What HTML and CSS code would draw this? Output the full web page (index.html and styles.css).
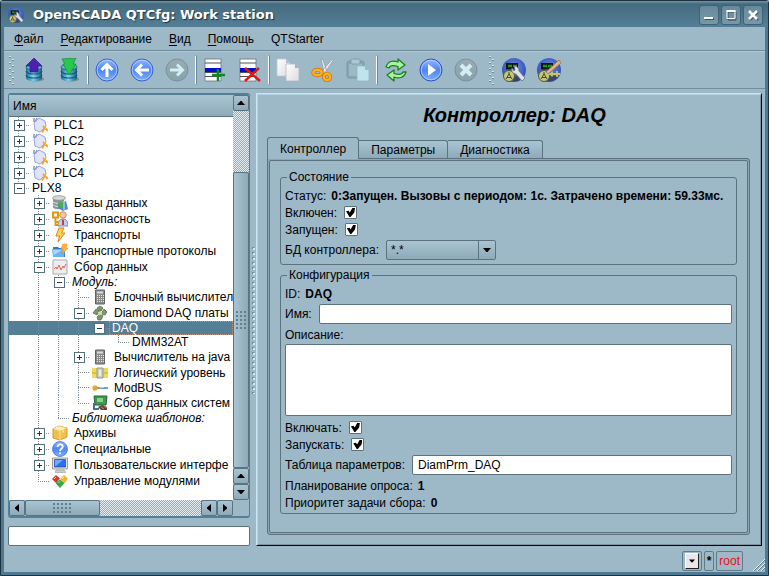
FILE: index.html
```html
<!DOCTYPE html>
<html lang="ru">
<head>
<meta charset="utf-8">
<title>OpenSCADA QTCfg: Work station</title>
<link rel="stylesheet" href="styles.css">
</head>
<body>
<svg class="defs" aria-hidden="true">
  <defs>
    <linearGradient id="gBlue" x1="0" y1="0" x2="0" y2="1"><stop offset="0" stop-color="#8fb8ff"/><stop offset=".5" stop-color="#4d86f2"/><stop offset="1" stop-color="#7fb0ff"/></linearGradient>
    <linearGradient id="gGrey" x1="0" y1="0" x2="0" y2="1"><stop offset="0" stop-color="#9aabb2"/><stop offset="1" stop-color="#86a3ad"/></linearGradient>
    <linearGradient id="gDb" x1="0" y1="0" x2="1" y2="0"><stop offset="0" stop-color="#1c6d94"/><stop offset=".45" stop-color="#7fd6ee"/><stop offset="1" stop-color="#14587d"/></linearGradient>
    <linearGradient id="gPage" x1="0" y1="0" x2="1" y2="1"><stop offset="0" stop-color="#ffffff"/><stop offset="1" stop-color="#dcdce2"/></linearGradient>
    <radialGradient id="gOrb" cx=".5" cy=".4" r=".6"><stop offset="0" stop-color="#6e8fe6"/><stop offset="1" stop-color="#2c4bb0"/></radialGradient>
    <symbol id="db" viewBox="0 0 24 24">
      <ellipse cx="14" cy="21" rx="8" ry="2.6" fill="#54707c" opacity=".6"/>
      <path d="M4 9v11c0 4 16 4 16 0V9z" fill="url(#gDb)"/>
      <ellipse cx="12" cy="9" rx="8" ry="3" fill="#5cb6d4" stroke="#1c6285" stroke-width=".8"/>
      <path d="M4 13c1 4 15 4 16 0M4 17c1 4 15 4 16 0" fill="none" stroke="#155a7c" stroke-width="1.2"/>
    </symbol>
    <symbol id="up" viewBox="0 0 24 24"><circle cx="12" cy="12" r="11" fill="url(#gBlue)" stroke="#3d62c8"/><circle cx="12" cy="12" r="9.8" fill="none" stroke="#b8d2ff" stroke-width=".8"/><path d="M12 19V7M6.500 12 12 6.500 17.500 12" fill="none" stroke="#fff" stroke-width="3"/></symbol>
    <symbol id="left" viewBox="0 0 24 24"><circle cx="12" cy="12" r="11" fill="url(#gBlue)" stroke="#3d62c8"/><circle cx="12" cy="12" r="9.800" fill="none" stroke="#b8d2ff" stroke-width=".8"/><path d="M19 12H7M12 6.500 6.500 12 12 17.500" fill="none" stroke="#fff" stroke-width="3"/></symbol>
    <symbol id="right" viewBox="0 0 24 24"><circle cx="12" cy="12" r="11" fill="url(#gGrey)" stroke="#7b929c"/><path d="M5 12h12M12 6.500 17.500 12 12 17.500" fill="none" stroke="#d3edf5" stroke-width="3"/></symbol>
    <symbol id="sheet" viewBox="0 0 24 24"><path d="M2 1h16v22H2z" fill="#fff" stroke="#6c7479" stroke-width=".8"/><path d="M2 5h16M2 14.500h16M2 18.500h16" stroke="#4c5358"/><path d="M2 10h16v4H2z" fill="#0010c8"/></symbol>
    <symbol id="copy" viewBox="0 0 24 24"><path d="M1 1h9l4 4v13H1z" fill="url(#gPage)" stroke="#c2c6cc" stroke-width=".8"/><path d="M10 1v4h4z" fill="#b9bcc4"/><path d="M10 6h9l4 4v13H10z" fill="url(#gPage)" stroke="#b2b8be" stroke-width=".8"/><path d="M19 6v4h4z" fill="#a9adb6"/></symbol>
    <symbol id="cut" viewBox="0 0 24 24"><path d="M10 1l2 .5 4.500 14-3 1zM21.500 1l1 1-9.500 14-3-2z" fill="#e8e8f2" stroke="#8f92a6" stroke-width=".7"/><g fill="none" stroke="#c97400" stroke-width="3.800"><ellipse cx="6.500" cy="14.500" rx="4.200" ry="2.800"/><ellipse cx="16" cy="19" rx="3.200" ry="3.200"/></g><g fill="none" stroke="#ffb020" stroke-width="2.400"><ellipse cx="6.500" cy="14.500" rx="4.200" ry="2.800"/><ellipse cx="16" cy="19" rx="3.200" ry="3.200"/></g></symbol>
    <symbol id="paste" viewBox="0 0 24 24"><rect x="1" y="3" width="17" height="17" rx="2" fill="#87a6b2" stroke="#789aa8"/><rect x="3" y="6" width="13" height="12" fill="#9cbac6"/><rect x="5" y="1" width="9" height="5" rx="1" fill="#a9c8d4" stroke="#7798a4" stroke-width=".8"/><path d="M11 8h8l4 4v11H11z" fill="#c0e3ee" stroke="#8fb9c8" stroke-width=".8"/><path d="M19 8v4h4z" fill="#92bdcc"/></symbol>
    <symbol id="reload" viewBox="0 0 24 24"><g fill="#a5f59a" stroke="#1f7d26" stroke-width="1.300" stroke-linejoin="round"><path d="M2 9C4 3 9 2 14 4V1l7 6-7 5V8.500C9 7 6 7 5 10z"/><path d="M22 14c-2 6-7 7-12 5v4l-7-6 7-5v3.500c5 1.500 8 1 9-1.500z"/></g></symbol>
    <symbol id="play" viewBox="0 0 24 24"><circle cx="12" cy="12" r="11" fill="url(#gBlue)" stroke="#2c50b4"/><circle cx="12" cy="12" r="9.800" fill="none" stroke="#b8d2ff" stroke-width=".8"/><path d="M9 6v12l8-6z" fill="#fff"/></symbol>
    <symbol id="stop" viewBox="0 0 24 24"><circle cx="12" cy="12" r="11" fill="url(#gGrey)" stroke="#7b929c"/><path d="M7 7l10 10M17 7 7 17" stroke="#d3edf5" stroke-width="4"/></symbol>
    <symbol id="orb" viewBox="0 0 24 24"><circle cx="12" cy="12" r="12" fill="url(#gOrb)"/><path d="M2 18a12 12 0 0 0 20 0z" fill="#3c4668"/><rect x="4" y="5" width="12" height="6.500" fill="#0c160c"/><path d="M6 8h4M11 8h4" stroke="#1c8f26" stroke-width="2.500"/><circle cx="7" cy="18" r="5.500" fill="#c3c87c" stroke="#55582e"/><path d="M4 21l3-5 3 5M7 17v-3M5 19.500h4" fill="none" stroke="#484a22"/></symbol>
    <symbol id="tools" viewBox="0 0 24 24"><use href="#orb"/><path d="M10 10c-1 3 1 6 4 6l6 7 3-3-6-7c0-3-2-5-5-5l1 4-1 1z" fill="#dde2ea" stroke="#68707e" stroke-width=".8"/></symbol>
    <symbol id="pencil" viewBox="0 0 24 24"><use href="#orb"/><path d="M11 16h12M15 13.500v5M20 13v6" stroke="#c9c66a" stroke-width="1.800"/><path d="M9 14 22 2l2 3-13 11z" fill="#e3b48c" stroke="#9b704e" stroke-width=".8"/></symbol>
    <symbol id="plc" viewBox="0 0 16 16"><path d="M2 1v4M5 1l-2 4" stroke="#9494cf" stroke-width="1.500"/><path d="M7 1l6 3 1 5-6 6-5-2-1-7z" fill="#dfe4fb" stroke="#9da3d6"/><path d="M10 15.500l3-5M11 9l5 5" stroke="#f4a53a" stroke-width="2"/></symbol>
    <symbol id="dbs" viewBox="0 0 16 16"><path d="M1 3v9c0 3 11 3 11 0V3z" fill="#8d9894"/><ellipse cx="7" cy="3" rx="6.500" ry="2.300" fill="#d5dbd8" stroke="#7c8784" stroke-width=".7"/><path d="M1 7c3 2 9 2 11 0M1 10c3 2 9 2 11 0" fill="none" stroke="#dfe5e2"/><path d="M6 8l8-2 2 8-5 2-5-3z" fill="#4a8ad0"/><path d="M6 8l5-1v6l-5-2z" fill="#4dae46"/><path d="M12 6v9" stroke="#d7eaf8"/></symbol>
    <symbol id="sec" viewBox="0 0 16 16"><circle cx="11" cy="4" r="3.300" fill="#f5c79a" stroke="#b8763a" stroke-width=".7"/><path d="M6 15c0-5 2-7 5-7s5 2 5 7z" fill="#b9d2f7" stroke="#4a72c0" stroke-width=".8"/><path d="M11 9v5" stroke="#d42a1c" stroke-width="1.800"/><path d="M1 1.500h5v5H1z" fill="none" stroke="#dd9a10" stroke-width="2.200"/><path d="M3.500 6v9M4 11h2.500M4 14h2.500" stroke="#dd9a10" stroke-width="2"/></symbol>
    <symbol id="bolt" viewBox="0 0 16 16"><path d="M7 1h5L9.500 6H13L6 15l1.500-6H4z" fill="#ffd94a" stroke="#e07f1c"/></symbol>
    <symbol id="proto" viewBox="0 0 16 16"><path d="M1 4h5l1 1h6v9H1z" fill="#2f79c8"/><path d="M0 6h13l-1 8H1z" fill="#6bb4f2"/><path d="M1 7h9l-8 5z" fill="#a6d8ff"/><path d="M11 1h4l-1 4h2l-6 6 1-5H9z" fill="#ffb43a" stroke="#e0841c" stroke-width=".5"/></symbol>
    <symbol id="daq" viewBox="0 0 16 16"><path d="M1 1h14v14H1z" fill="#eee" stroke="#a9a9ae"/><path d="M2 10l2-2 1 2 2-4 2 5 2-4 1 2 2-4" fill="none" stroke="#e2635e"/></symbol>
    <symbol id="calc" viewBox="0 0 16 16"><path d="M3.500 1h9v14h-9z" fill="#8b8b8b" stroke="#626262"/><path d="M5 2.500h6v2H5z" fill="#d6dfce"/><path d="M5 6.500h7M5 8.500h7M5 10.500h7M5 12.500h7" stroke="#e5e5e5" stroke-dasharray="1 1"/></symbol>
    <symbol id="diam" viewBox="0 0 16 16"><g fill="#7e9a6c" stroke="#4b6547" stroke-width=".7"><path d="M8 1l3 2-2 3H7L5 3z"/><path d="M4 4l3 2-2 4-4-2z"/><path d="M12 4l3 3-2 3-4-1z"/><path d="M8 9l3 2-2 4H6l-1-3z"/></g><path d="M6 7h4v3H6z" fill="#cfd8a8"/></symbol>
    <symbol id="logic" viewBox="0 0 16 16"><path d="M0 3h16v10H0z" fill="#f4d65a"/><path d="M0 8h4M12 8h4" stroke="#d9a31c"/><path d="M5 3h6v10H5z" fill="#c9d3c2" stroke="#8f9a92"/><path d="M7 5h2v6H7z" fill="#e9eeea"/></symbol>
    <symbol id="bus" viewBox="0 0 16 16"><path d="M3 8h13" stroke="#3f7ea8" stroke-width="1.500"/><path d="M7 7.500h5" stroke="#a5cfe2"/><path d="M0 8h6M3 5v6M1 6l4 4M5 6l-4 4" stroke="#f0a01e" stroke-width="1.200"/></symbol>
    <symbol id="sys" viewBox="0 0 16 16"><path d="M2 1h13l-1 9H3z" fill="#3f9a4e" stroke="#286238"/><path d="M5 3h6v4H5z" fill="#8bd08c"/><path d="M2 8v6h5" stroke="#4a6f8c" stroke-width="2" fill="none"/><path d="M6 12l4-2 5 2v3H9z" fill="#4b4543"/><path d="M9 12l3 2M12 11l3 2" stroke="#c46f54" stroke-width="1.500"/></symbol>
    <symbol id="arch" viewBox="0 0 16 16"><path d="M1 4l6-3 8 2v9l-7 3-7-2z" fill="#f0c04c" stroke="#d19a2c"/><path d="M1 4l7 2 7-3-8-2z" fill="#ffe9a2"/><path d="M8 6v9" stroke="#ffe394"/><path d="M4 2.500l7 2v3" fill="none" stroke="#fff7d8"/></symbol>
    <symbol id="help" viewBox="0 0 16 16"><circle cx="8" cy="8" r="7.500" fill="url(#gBlue)" stroke="#3e68cf" stroke-width=".7"/><path d="M5.500 6c0-3.500 5.200-3.200 5.200-.3C10.700 7.800 8 7.600 8 10" fill="none" stroke="#fff" stroke-width="1.800"/><circle cx="8" cy="12.300" r="1.100" fill="#fff"/></symbol>
    <symbol id="mon" viewBox="0 0 16 16"><path d="M.5 1h15v11H.5z" fill="#e1e1de" stroke="#a1a19c"/><path d="M2.500 2.500h11v7.500h-11z" fill="#2d6fe6" stroke="#1c4ba8" stroke-width=".7"/><path d="M3 3h8L4 9H3z" fill="#70a8ff"/><path d="M4 13h8l2 2.500H3z" fill="#cfcfca" stroke="#9b9b96" stroke-width=".6"/></symbol>
    <symbol id="mods" viewBox="0 0 16 16"><path d="M4 2l4 3.500-4 4.500-4-4z" fill="#e03424"/><path d="M12 2l4 3.500-3 4.500-5-4z" fill="#e9b92a"/><path d="M8 6.500l4.500 3.500L8 15l-4.500-5z" fill="#33a840"/><path d="M2 6l2-2M10 5.500l2-1.500M6.500 10 8 8.500" stroke="#fff" stroke-opacity=".7"/></symbol>
    <symbol id="au" viewBox="0 0 8 8"><path d="M0 6h8L4.500 2h-1z"/></symbol>
    <symbol id="ad" viewBox="0 0 8 8"><path d="M0 2h8L4.500 6h-1z"/></symbol>
    <symbol id="al" viewBox="0 0 8 8"><path d="M6 0v8L2 4.500v-1z"/></symbol>
    <symbol id="ar" viewBox="0 0 8 8"><path d="M2 0v8l4-3.500v-1z"/></symbol>
  </defs>
</svg>

<div class="window">
  <header class="titlebar">
    <svg class="app"><use href="#tools"/></svg>
    <h1>OpenSCADA QTCfg: Work station</h1>
    <div class="winbtns">
      <button type="button" aria-label="Свернуть"><svg viewBox="0 0 12 12"><path d="M2 10h9" stroke="#34515f" stroke-width="2"/><path d="M1 9h9" stroke="#fff" stroke-width="2"/></svg></button>
      <button type="button" aria-label="Развернуть"><svg viewBox="0 0 12 12"><path d="M3 3h8v8H3z" stroke="#34515f" fill="none"/><path d="M2 2h8v7.500H2z" fill="none" stroke="#fff"/><path d="M1.500 2h9" stroke="#fff" stroke-width="2"/></svg></button>
      <button type="button" aria-label="Закрыть"><svg viewBox="0 0 12 12"><path d="M3 3l8 8M11 3l-8 8" stroke="#34515f" stroke-width="2"/><path d="M2 2l8 8M10 2l-8 8" stroke="#fff" stroke-width="2.500"/></svg></button>
    </div>
  </header>

  <nav class="menubar">
    <button type="button"><u>Ф</u>айл</button>
    <button type="button"><u>Р</u>едактирование</button>
    <button type="button"><u>В</u>ид</button>
    <button type="button"><u>П</u>омощь</button>
    <button type="button">QTStarter</button>
  </nav>

  <div class="toolbar">
    <span class="handle"></span>
    <button type="button" aria-label="Загрузить"><svg viewBox="0 0 24 24"><use href="#db"/><path d="M8 14V8H4l8-8 8 8h-4v6z" fill="#4a22b0" stroke="#351585" stroke-width=".7"/></svg></button>
    <button type="button" aria-label="Сохранить"><svg viewBox="0 0 24 24"><use href="#db"/><path d="M5 1l14-1-3 6h3l-7 11L6 6h2z" fill="#27c94c" stroke="#128a30" stroke-width=".7"/></svg></button>
    <span class="sep"></span>
    <button type="button" aria-label="Вверх"><svg><use href="#up"/></svg></button>
    <button type="button" aria-label="Назад"><svg><use href="#left"/></svg></button>
    <button type="button" aria-label="Вперёд"><svg><use href="#right"/></svg></button>
    <span class="sep"></span>
    <button type="button" aria-label="Добавить"><svg viewBox="0 0 24 24"><use href="#sheet"/><path d="M15 11v12M9 17h13" stroke="#0d8a22" stroke-width="2.500"/></svg></button>
    <button type="button" aria-label="Удалить"><svg viewBox="0 0 24 24"><use href="#sheet"/><path d="M7 10l15 13M21 10 7 23" stroke="#dc1818" stroke-width="2.500"/></svg></button>
    <span class="sep"></span>
    <button type="button" aria-label="Копировать"><svg><use href="#copy"/></svg></button>
    <button type="button" aria-label="Вырезать"><svg><use href="#cut"/></svg></button>
    <button type="button" aria-label="Вставить"><svg><use href="#paste"/></svg></button>
    <span class="sep"></span>
    <button type="button" aria-label="Обновить"><svg><use href="#reload"/></svg></button>
    <button type="button" aria-label="Запустить"><svg><use href="#play"/></svg></button>
    <button type="button" aria-label="Остановить"><svg><use href="#stop"/></svg></button>
    <span class="handle second"></span>
    <button type="button" aria-label="Конфигуратор"><svg><use href="#tools"/></svg></button>
    <button type="button" aria-label="Разработка"><svg><use href="#pencil"/></svg></button>
  </div>

  <div class="work">
    <aside class="side">
      <div class="tree">
        <div class="treemain">
          <div class="treehead">Имя</div>
          <ul class="rows">
            <li><button type="button" class="g v h box plus" aria-label="PLC1"></button><svg><use href="#plc"/></svg><span>PLC1</span></li>
            <li><button type="button" class="g v h box plus" aria-label="PLC2"></button><svg><use href="#plc"/></svg><span>PLC2</span></li>
            <li><button type="button" class="g v h box plus" aria-label="PLC3"></button><svg><use href="#plc"/></svg><span>PLC3</span></li>
            <li><button type="button" class="g v h box plus" aria-label="PLC4"></button><svg><use href="#plc"/></svg><span>PLC4</span></li>
            <li class="bare"><button type="button" class="g e h box" aria-label="PLX8"></button><span>PLX8</span></li>
            <li><i class="g"></i><button type="button" class="g v h box plus" aria-label="Базы данных"></button><svg><use href="#dbs"/></svg><span>Базы данных</span></li>
            <li><i class="g"></i><button type="button" class="g v h box plus" aria-label="Безопасность"></button><svg><use href="#sec"/></svg><span>Безопасность</span></li>
            <li><i class="g"></i><button type="button" class="g v h box plus" aria-label="Транспорты"></button><svg><use href="#bolt"/></svg><span>Транспорты</span></li>
            <li><i class="g"></i><button type="button" class="g v h box plus" aria-label="Транспортные протоколы"></button><svg><use href="#proto"/></svg><span>Транспортные протоколы</span></li>
            <li><i class="g"></i><button type="button" class="g v h box" aria-label="Сбор данных"></button><svg><use href="#daq"/></svg><span>Сбор данных</span></li>
            <li class="bare"><i class="g"></i><i class="g v"></i><button type="button" class="g v h box" aria-label="Модуль"></button><span class="it">Модуль:</span></li>
            <li><i class="g"></i><i class="g v"></i><i class="g v"></i><i class="g v h"></i><svg><use href="#calc"/></svg><span>Блочный вычислител</span></li>
            <li><i class="g"></i><i class="g v"></i><i class="g v"></i><button type="button" class="g v h box" aria-label="Diamond DAQ платы"></button><svg><use href="#diam"/></svg><span>Diamond DAQ платы</span></li>
            <li class="bare selected"><i class="g"></i><i class="g v"></i><i class="g v"></i><i class="g v"></i><button type="button" class="g h box" aria-label="DAQ"></button><span>DAQ</span></li>
            <li class="bare"><i class="g"></i><i class="g v"></i><i class="g v"></i><i class="g v"></i><i class="g"></i><i class="g e h"></i><span>DMM32AT</span></li>
            <li><i class="g"></i><i class="g v"></i><i class="g v"></i><button type="button" class="g v h box plus" aria-label="Вычислитель"></button><svg><use href="#calc"/></svg><span>Вычислитель на java</span></li>
            <li class="mid"><i class="g"></i><i class="g v"></i><i class="g v"></i><i class="g v h"></i><svg><use href="#logic"/></svg><span>Логический уровень</span></li>
            <li class="mid"><i class="g"></i><i class="g v"></i><i class="g v"></i><i class="g v h"></i><svg><use href="#bus"/></svg><span>ModBUS</span></li>
            <li><i class="g"></i><i class="g v"></i><i class="g v"></i><i class="g e h"></i><svg><use href="#sys"/></svg><span>Сбор данных систем</span></li>
            <li class="bare"><i class="g"></i><i class="g v"></i><i class="g e h"></i><span class="it">Библиотека шаблонов:</span></li>
            <li><i class="g"></i><button type="button" class="g v h box plus" aria-label="Архивы"></button><svg><use href="#arch"/></svg><span>Архивы</span></li>
            <li><i class="g"></i><button type="button" class="g v h box plus" aria-label="Специальные"></button><svg><use href="#help"/></svg><span>Специальные</span></li>
            <li><i class="g"></i><button type="button" class="g v h box plus" aria-label="Пользовательские интерфейсы"></button><svg><use href="#mon"/></svg><span>Пользовательские интерфе</span></li>
            <li><i class="g"></i><i class="g e h"></i><svg><use href="#mods"/></svg><span>Управление модулями</span></li>
          </ul>
        </div>
        <div class="vbar">
          <button type="button" aria-label="Вверх"><svg><use href="#au"/></svg></button>
          <div class="track"></div>
          <div class="thumb"><i></i></div>
          <button type="button" aria-label="Вверх"><svg><use href="#au"/></svg></button>
          <button type="button" aria-label="Вниз"><svg><use href="#ad"/></svg></button>
        </div>
        <div class="hbar">
          <button type="button" aria-label="Влево"><svg><use href="#al"/></svg></button>
          <div class="thumb"><i></i></div>
          <div class="track"></div>
          <button type="button" aria-label="Влево"><svg><use href="#al"/></svg></button>
          <button type="button" aria-label="Вправо"><svg><use href="#ar"/></svg></button>
        </div>
      </div>
      <input class="text" type="text" aria-label="Поиск">
    </aside>

    <div class="splitter"><i></i></div>

    <main class="page">
      <h2>Контроллер: DAQ</h2>
      <div class="tabs">
        <button type="button" class="active">Контроллер</button>
        <button type="button">Параметры</button>
        <button type="button">Диагностика</button>
      </div>
      <div class="pane">
        <form class="inner">
          <fieldset>
            <legend>Состояние</legend>
            <div class="row">Статус: <b>0:Запущен. Вызовы с периодом: 1с. Затрачено времени: 59.33мс.</b></div>
            <div class="row"><label for="on">Включен:</label><input type="checkbox" id="on" checked></div>
            <div class="row"><label for="run">Запущен:</label><input type="checkbox" id="run" checked></div>
            <div class="row field"><label for="dbsel">БД контроллера:</label>
              <span class="combo"><select id="dbsel"><option>*.*</option></select><svg><use href="#ad"/></svg></span></div>
          </fieldset>
          <fieldset>
            <legend>Конфигурация</legend>
            <div class="row">ID: <b>DAQ</b></div>
            <div class="row field"><label for="name">Имя:</label><input class="text" type="text" id="name"></div>
            <div class="row"><label for="descr">Описание:</label></div>
            <textarea id="descr"></textarea>
            <div class="row"><label for="en">Включать:</label><input type="checkbox" id="en" checked></div>
            <div class="row"><label for="st">Запускать:</label><input type="checkbox" id="st" checked></div>
            <div class="row field"><label for="tbl">Таблица параметров:</label><input class="text" type="text" id="tbl" value="DiamPrm_DAQ"></div>
            <div class="row">Планирование опроса: <b>1</b></div>
            <div class="row">Приоритет задачи сбора: <b>0</b></div>
          </fieldset>
        </form>
      </div>
    </main>
  </div>

  <footer class="status">
    <span class="cell"><button type="button" aria-label="Меню"><svg><use href="#ad"/></svg></button></span>
    <span class="cell star">*</span>
    <span class="cell user">root</span>
    <svg class="grip" viewBox="0 0 13 13"><path d="M1 13 13 1M5 13l8-8M9 13l4-4" stroke="#e2f3fb"/><path d="M2 13 13 2M6 13l7-7M10 13l3-3" stroke="#5f7b89"/></svg>
  </footer>
</div>
</body>
</html>
```

FILE: styles.css
```css
* { box-sizing: border-box; }

:root {
  --bg: #9db8c7;
  --line: #5c727e;
  --steel: #557f96;
  --raised: linear-gradient(#a9c4d2, #8ea9b8);
}

body {
  margin: 0;
  background: #9db8c7;
  color: #000;
  font: 12px/14px "Liberation Sans", Arial, sans-serif;
}

button, input, select, textarea { font: inherit; color: inherit; }
button { border: 0; padding: 0; background: none; }
svg { display: block; flex: none; }
.defs { position: absolute; width: 0; height: 0; }

.window {
  display: flex;
  flex-direction: column;
  min-height: 100vh;
  padding: 0 3px 3px;
  border: 1px solid #1d323d;
  background: #4e7990;
  border-radius: 3px 3px 0 0;
}

/* title bar */
.titlebar {
  display: flex;
  align-items: center;
  height: 26px;
  margin: 0 -3px;
  padding: 1px 5px 0 7px;
  background: linear-gradient(#6f96aa 0, #446a7e 3px, #557f98 100%);
}
.app { width: 16px; height: 16px; }
h1 {
  flex: 1;
  margin: 0 0 0 9px;
  color: #fff;
  font: bold 13px/18px "DejaVu Sans", sans-serif;
  text-shadow: 1px 1px 1px #1c3440;
}
.winbtns { display: flex; gap: 2px; }
.winbtns button {
  display: grid;
  place-items: center;
  width: 20px;
  height: 20px;
  border: 1px solid #3f6275;
  border-radius: 3px;
  background: linear-gradient(#66899b, #7898a9);
}
.winbtns svg { width: 12px; height: 12px; }

/* menu and tools */
.menubar {
  display: flex;
  gap: 1px;
  height: 24px;
  padding-left: 2px;
  background: var(--bg);
  border-bottom: 1px solid #718c9a;
}
.menubar button { padding: 0 8px; }
.menubar u { text-underline-offset: 2px; }
.toolbar {
  display: flex;
  align-items: center;
  height: 38px;
  background: var(--bg);
  border-top: 1px solid #aec8d6;
  border-bottom: 1px solid #718c9a;
}
.toolbar button { display: grid; place-items: center; width: 35px; height: 34px; }
.toolbar svg { width: 24px; height: 24px; }
.sep { width: 3px; height: 30px; border: 1px solid var(--bg); border-right-color: #6d8897; background: #f4fbff; }
.handle {
  --lit: linear-gradient(#cfe9f5, #cfe9f5);
  --dim: linear-gradient(#6d8b9a, #6d8b9a);
  width: 6px;
  height: 30px;
  margin: 0 1px 0 5px;
  background:
    var(--lit) 1px 1px / 6px 6px,
    var(--bg);
  background:
    conic-gradient(from 90deg at 4px 4px, var(--bg) 270deg, transparent 0) 0 0 / 6px 6px;
  background:
    repeating-linear-gradient(transparent 0 1px, #cfe9f5 1px 2px, #6d8b9a 2px 3px, transparent 3px 6px) 0 0 / 2px 100% no-repeat,
    repeating-linear-gradient(transparent 0 4px, #cfe9f5 4px 5px, #6d8b9a 5px 6px) 3px 0 / 2px 100% no-repeat;
}
.handle.second { margin-left: 6px; }

/* work area */
.work { display: flex; flex: 1; padding: 4px 3px 0 4px; background: var(--bg); }
.side { display: flex; flex: none; flex-direction: column; width: 242px; gap: 8px; }
.tree {
  display: grid;
  flex: 1;
  grid-template: 1fr 16px / 1fr 16px;
  border: 1px solid var(--steel);
  border-width: 2px 1px;
  border-radius: 3px;
}
.treemain { min-width: 0; overflow: hidden; background: #fff; }
.treehead {
  height: 22px;
  padding: 4px 4px 3px;
  border-bottom: 1px solid var(--line);
  background: var(--raised);
}
.rows { margin: 0; padding: 0; list-style: none; }
.rows li { display: flex; align-items: center; height: 16px; white-space: nowrap; }
.rows li.bare { height: 14px; }
.rows li.mid { height: 15px; }
.rows svg { width: 16px; height: 16px; margin: 0 3px; }
.rows span { padding-left: 3px; }
.it { font-style: italic; }
.g {
  --vert: linear-gradient(transparent, transparent);
  --horz: linear-gradient(transparent, transparent);
  flex: none;
  align-self: stretch;
  width: 20px;
  background:
    var(--vert) 9px 0 / 1px var(--len, 100%) no-repeat,
    var(--horz) 9px 50% / 11px 1px no-repeat;
}
.v, .e { --vert: repeating-linear-gradient(#7f8f98 0 1px, transparent 1px 2px); }
.e { --len: 50%; }
.h { --horz: repeating-linear-gradient(90deg, #7f8f98 0 1px, transparent 1px 2px); }
.box { display: flex; align-items: center; padding-left: 5px; }
.box::before {
  content: "";
  width: 9px;
  height: 9px;
  border: 1px solid #566f7c;
  background: linear-gradient(#263943, #263943) center / 5px 1px no-repeat #fff;
}
.plus::before {
  background:
    linear-gradient(#263943, #263943) center / 5px 1px no-repeat,
    linear-gradient(#263943, #263943) center / 1px 5px no-repeat #fff;
}
.selected { background: var(--steel); color: #fff; }
.selected span { flex: 1; outline: 1px dotted #b7917c; outline-offset: -1px; }

.vbar, .hbar { display: flex; }
.vbar { flex-direction: column; }
.vbar button, .hbar button, .thumb {
  display: grid;
  flex: none;
  place-items: center;
  width: 16px;
  height: 16px;
  border: 1px solid var(--line);
  border-radius: 2px;
  background: var(--raised);
}
.vbar svg, .hbar svg { width: 8px; height: 8px; }
.track { background: repeating-conic-gradient(#8fafc0 0 25%, #e4edf2 0 50%) 0 0 / 2px 2px; }
.vbar .track { flex: 62; }
.vbar .thumb { flex: 296; background: linear-gradient(90deg, #a9c4d2, #8ea9b8); }
.hbar .thumb { flex: 74; }
.hbar .track { flex: 102; }
.thumb i { width: 11px; height: 19px; background: radial-gradient(circle at 1px 1px, #627f8e 1px, transparent 1px) 0 0 / 4px 4px; }
.hbar .thumb i { width: 19px; height: 11px; }

.text, textarea, .combo {
  border: 1px solid var(--line);
  border-radius: 2px;
  background: #fff;
}
.text { width: 100%; height: 20px; padding: 0 5px; }

.splitter { display: grid; flex: none; place-items: center; width: 6px; }
.splitter i {
  width: 4px;
  height: 148px;
  background:
    radial-gradient(circle at 3px 3px, #d0eaf6 1px, transparent 1px) 0 0 / 4px 5px,
    radial-gradient(circle at 2px 2px, #6d8b9b 1px, transparent 1px) 0 0 / 4px 5px;
}

/* settings page */
.page {
  display: flex;
  flex: 1;
  flex-direction: column;
  min-width: 0;
  padding: 9px 11px 10px 10px;
  border: 1px solid;
  border-color: #c8e6f5 #000 #000 #c8e6f5;
  box-shadow: inset 1px 1px #b3d1e0, inset -1px -1px #7b95a3;
}
h2 {
  margin: 0;
  padding-left: 12px;
  font: italic bold 20px/24px "Liberation Sans", Arial, sans-serif;
  text-align: center;
}
.tabs { display: flex; align-items: flex-end; margin-top: 10px; }
.tabs button {
  height: 18px;
  padding: 0 12px;
  border: 1px solid var(--line);
  border-bottom: 0;
  border-left: 0;
  border-radius: 0 3px 0 0;
  background: var(--raised);
}
.tabs .active {
  position: relative;
  height: 22px;
  margin-bottom: -1px;
  border-left: 1px solid var(--line);
  border-radius: 3px 3px 0 0;
  background: var(--bg);
}
.pane { display: flex; flex: 1; padding: 1px; border: 1px solid var(--line); border-radius: 0 3px 3px 3px; background: #8ca6b4; }
.inner {
  flex: 1;
  min-width: 0;
  padding: 9px 10px;
  border: 1px solid var(--line);
  border-radius: 2px;
  background: var(--bg);
}
fieldset {
  min-width: 0;
  margin: 0 0 3px;
  padding: 3px 4px 2px;
  border: 1px solid var(--line);
  border-radius: 3px;
}
legend { margin-left: 2px; padding: 0 2px; }
.row { display: flex; align-items: center; gap: 5px; height: 17px; white-space: nowrap; }
.row label { margin-right: 2px; }
.field { height: 20px; margin: 2px 0; }
.field .text { flex: 1; width: auto; min-width: 0; }
textarea { display: block; width: 100%; height: 72px; margin: 1px 0 3px; resize: none; }
input[type="checkbox"] {
  display: grid;
  place-items: center;
  appearance: none;
  width: 13px;
  height: 13px;
  margin: 0;
  border: 1px solid var(--line);
  border-radius: 1px;
  background: #fff;
}
input[type="checkbox"]:checked::before {
  content: "";
  width: 9px;
  height: 9px;
  background: #000;
  clip-path: polygon(0 35%, 30% 30%, 42% 50%, 70% 0, 100% 0, 92% 50%, 50% 100%, 38% 100%);
}
.combo { position: relative; display: flex; width: 110px; height: 20px; background: var(--raised); }
.combo select { flex: 1; appearance: none; border: 0; padding: 0 4px; background: none; }
.combo svg {
  position: absolute;
  top: 0;
  right: 0;
  width: 17px;
  height: 18px;
  padding: 5px 4px;
  border-left: 1px solid var(--line);
  pointer-events: none;
}

/* status bar */
.status {
  display: flex;
  align-items: flex-end;
  justify-content: flex-end;
  gap: 2px;
  height: 26px;
  padding-bottom: 1px;
  background: var(--bg);
}
.cell { display: grid; place-items: center; height: 20px; padding: 0 2px; border: 1px solid #617b88; border-radius: 2px; }
.cell button {
  display: grid;
  place-items: center;
  width: 14px;
  height: 16px;
  border: 1px solid #fff;
  border-right-color: #222;
  border-bottom-color: #222;
  background: #e8e8e8;
}
.cell svg { width: 6px; height: 6px; }
.star { font-weight: bold; }
.user { color: #f00a1c; }
.grip { width: 13px; height: 13px; margin: 0 0 0 7px; }
```
